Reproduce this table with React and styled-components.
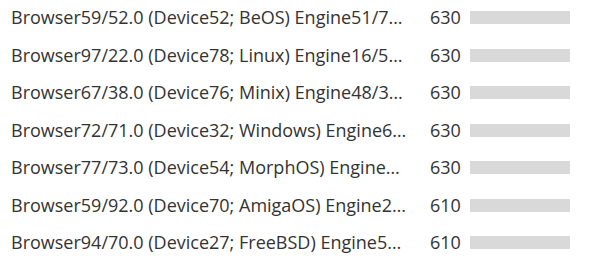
import React from 'react';
import styled, {createGlobalStyle} from 'styled-components';

const GlobalStyle = createGlobalStyle`
  body {
    margin: 0;
    background: #ffffff;
    font-family: "Open Sans", "Noto Sans", sans-serif;
  }
`;

const List = styled.div`
  display: flex;
  flex-direction: column;
  padding-left: 11px;
`;

const Row = styled.div`
  display: flex;
  align-items: flex-start;
  box-sizing: border-box;
  height: 37.5px;
  padding-top: 5px;
`;

const Label = styled.div`
  width: 398px;
  margin-right: 21px;
  font-size: 18px;
  line-height: 24px;
  color: #333333;
  white-space: nowrap;
  overflow: hidden;
  text-overflow: ellipsis;
`;

const Count = styled.div`
  width: 40px;
  font-size: 18px;
  line-height: 24px;
  color: #333333;
`;

const Track = styled.div`
  width: 100px;
  height: 13px;
  margin-top: 6px;
  background: #d9d9d9;
`;

const Fill = styled.div`
  height: 100%;
  background: ${props => props.color || '#d9d9d9'};
`;

const rows = [
    {ua: 'Browser59/52.0 (Device52; BeOS) Engine51/78.0', hits: 630},
    {ua: 'Browser97/22.0 (Device78; Linux) Engine16/54.0', hits: 630},
    {ua: 'Browser67/38.0 (Device76; Minix) Engine48/31.0', hits: 630},
    {ua: 'Browser72/71.0 (Device32; Windows) Engine64/12.0', hits: 630},
    {ua: 'Browser77/73.0 (Device54; MorphOS) Engine28/44.0', hits: 630},
    {ua: 'Browser59/92.0 (Device70; AmigaOS) Engine21/66.0', hits: 610},
    {ua: 'Browser94/70.0 (Device27; FreeBSD) Engine57/18.0', hits: 610}
];

const max = 630;

export default function App() {
    return (
        <>
            <GlobalStyle/>
            <List>
                {rows.map((row, index) => (
                    <Row key={index}>
                        <Label>{row.ua}</Label>
                        <Count>{row.hits}</Count>
                        <Track>
                            <Fill style={{width: (row.hits / max * 100) + '%'}}/>
                        </Track>
                    </Row>
                ))}
            </List>
        </>
    );
}
